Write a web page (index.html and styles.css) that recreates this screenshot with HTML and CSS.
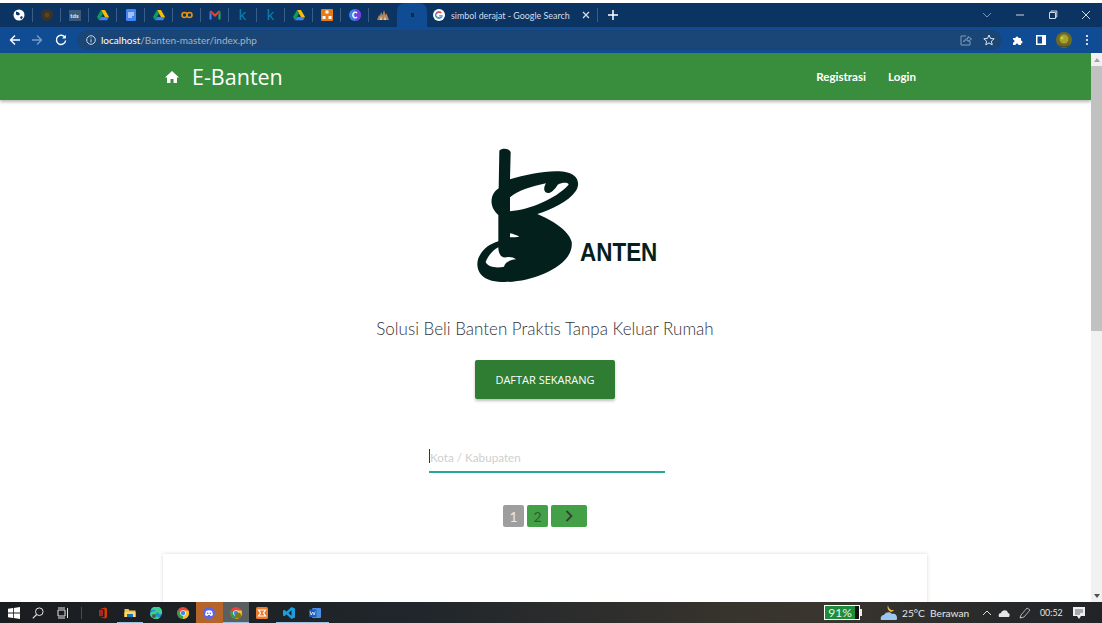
FILE: index.html
```html
<!DOCTYPE html>
<html lang="id">
<head>
<meta charset="utf-8">
<title>E-Banten</title>
<link rel="stylesheet" href="styles.css">
</head>
<body>
<div class="screen">
  <div class="topline"></div>
  <header class="tabstrip">
    <div class="slot"><svg class="ico" viewBox="0 0 12 12"><circle cx="6" cy="6" r="5.5" fill="#fff"/><path d="M3 2.500l3 1 1 2-2 1-2-1zM7 8l2-1 .8 1.500L8 10.500z" fill="#0b3462"/></svg></div>
    <div class="slot"><svg class="ico" viewBox="0 0 12 12"><circle cx="6" cy="6" r="6" fill="#3a3328"/><circle cx="6" cy="6" r="2.500" fill="#5b4426"/></svg></div>
    <div class="slot"><span class="tds">tds</span></div>
    <div class="slot"><svg class="ico" viewBox="0 0 12 12"><use href="#drive"/></svg></div>
    <div class="slot"><svg class="ico" viewBox="0 0 12 12"><rect x="1" width="10" height="12" rx="1.200" fill="#4285f4"/><path d="M3 4h6M3 6h6M3 8h4" stroke="#fff"/></svg></div>
    <div class="slot"><svg class="ico" viewBox="0 0 12 12"><use href="#drive"/></svg></div>
    <div class="slot"><svg class="ico" viewBox="0 0 12 12"><circle cx="3.500" cy="6" r="2.500" fill="none" stroke="#e8910c" stroke-width="1.600"/><circle cx="8.500" cy="6" r="2.500" fill="none" stroke="#e8910c" stroke-width="1.600"/></svg></div>
    <div class="slot"><svg class="ico" viewBox="0 0 12 12"><path d="M.5 2.500v8h2v-5z" fill="#4285f4"/><path d="M11.500 2.500v8h-2v-5z" fill="#34a853"/><path d="M.5 2.500l1.500-1L6 5l4-3.500 1.500 1L6 8z" fill="#ea4335"/></svg></div>
    <div class="slot"><span class="k">k</span></div>
    <div class="slot"><span class="k">k</span></div>
    <div class="slot"><svg class="ico" viewBox="0 0 12 12"><use href="#drive"/></svg></div>
    <div class="slot"><svg class="ico" viewBox="0 0 12 12"><rect width="12" height="12" rx="1" fill="#ea7a16"/><path d="M4.500 1.500h3v3h-3zM1.500 7h3v3h-3zM7.500 7h3v3h-3z" fill="#fff"/></svg></div>
    <div class="slot"><svg class="ico" viewBox="0 0 12 12"><circle cx="6" cy="6" r="6" fill="#3f7ff0"/><path d="M6 0a6 6 0 0 1 0 12z" fill="#7d3ce0"/><path d="M8 4.200A2.300 2.800 0 1 0 8 7.800" fill="none" stroke="#fff" stroke-width="1.300"/></svg></div>
    <div class="slot slot-last"><svg class="ico" viewBox="0 0 12 12"><path d="M0 11l2-5 1 1 1-4 1.500 3L7 1l1.500 5 1-1.500L12 11z" fill="#b2845a"/><path d="M3 11l1-4 1 4zM7 11l1-4 1 4z" fill="#e7d9c4"/></svg></div>
    <div class="tab-pinned"><span class="pin-dot"></span></div>
    <div class="tab-open">
      <svg class="ico" viewBox="0 0 12 12"><circle cx="6" cy="6" r="6" fill="#fff"/><path d="M9.800 6.200H6.200v1.200h2.200a2.600 2.600 0 1 1-.7-3.200l.9-.9a3.900 3.900 0 1 0 1.200 2.900z" fill="#4285f4"/><path d="M2.700 4.400a3.900 3.900 0 0 1 5.900-1.100l-.9.900a2.600 2.600 0 0 0-3.900.9z" fill="#ea4335"/><path d="M2.600 7.500l1.100-.8a2.600 2.600 0 0 0 3.900 1l1 .8a3.900 3.900 0 0 1-6-2z" fill="#34a853"/></svg>
      <span class="tab-title">simbol derajat - Google Search</span>
      <svg class="tab-x" viewBox="0 0 8 8"><path d="M1 1l6 6M7 1l-6 6" stroke="#d5dde8" stroke-width="1.300"/></svg>
    </div>
    <span class="tab-sep"></span>
    <svg class="newtab" viewBox="0 0 10 10"><path d="M5 0v10M0 5h10" stroke="#fff" stroke-width="1.500"/></svg>
    <div class="winctl">
      <div class="wbtn"><svg class="wico" viewBox="0 0 10 10"><path d="M1 3l4 4 4-4" fill="none" stroke="#7f94ad"/></svg></div>
      <div class="wbtn"><svg class="wico" viewBox="0 0 10 10"><path d="M1 5h8" stroke="#cfd8e3"/></svg></div>
      <div class="wbtn"><svg class="wico" viewBox="0 0 10 10"><path d="M1.500 2.500h6v6h-6zM3 2.500V1h5.800v6H7.500" fill="none" stroke="#cfd8e3"/></svg></div>
      <div class="wbtn"><svg class="wico" viewBox="0 0 10 10"><path d="M1 1l8 8M9 1l-8 8" stroke="#cfd8e3"/></svg></div>
    </div>
  </header>
  <div class="toolbar">
    <svg class="tool t-back" viewBox="0 0 12 12"><path d="M11 6H1.500M6 1.500L1.500 6 6 10.500" fill="none" stroke="#fff" stroke-width="1.400"/></svg>
    <svg class="tool t-fwd" viewBox="0 0 12 12"><path d="M1 6h9.500M6 1.500L10.500 6 6 10.500" fill="none" stroke="#7b9cc4" stroke-width="1.400"/></svg>
    <svg class="tool t-reload" viewBox="0 0 12 12"><path d="M10 3.500A4.600 4.600 0 1 0 10.600 6.500" fill="none" stroke="#fff" stroke-width="1.400"/><path d="M10.800 .8v3.700H7.100z" fill="#fff"/></svg>
    <div class="omnibox">
      <svg class="info" viewBox="0 0 10 10"><circle cx="5" cy="5" r="4.300" fill="none" stroke="#d2d9e3"/><path d="M5 4.300v3M5 2.400v1" stroke="#d2d9e3"/></svg>
      <span class="url"><span class="host">localhost</span>/Banten-master/index.php</span>
      <svg class="o-share" viewBox="0 0 12 12"><path d="M6 2H1v9h9V7" fill="none" stroke="#7f9bbd"/><path d="M3.500 8C4 5.500 6 4.500 8 4.500V2.500L11.500 5 8 7.500V6C6 6 4.500 6.500 3.500 8z" fill="none" stroke="#7f9bbd"/></svg>
      <svg class="o-star" viewBox="0 0 12 12"><path d="M6 1l1.500 3.400 3.700.4-2.800 2.400.8 3.600L6 8.900l-3.200 1.900.8-3.600L.8 4.800l3.700-.4z" fill="none" stroke="#dfe6ef"/></svg>
    </div>
    <svg class="tool t-puzzle" viewBox="0 0 12 12"><path d="M1 4h2.500a1.500 1.500 0 1 1 3 0H9v2.500a1.500 1.500 0 1 1 0 3V11H6.500a1.500 1.500 0 0 0-3 0H1V8.500a1.500 1.500 0 0 0 0-3z" fill="#fff"/></svg>
    <svg class="tool t-side" viewBox="0 0 12 12"><path d="M1 1h10v10H1z" fill="#fff"/><path d="M2.500 2.500h4.500v7H2.500z" fill="#0f4c94"/></svg>
    <svg class="avatar" viewBox="0 0 16 16"><circle cx="8" cy="8" r="8" fill="#6d6a24"/><circle cx="8" cy="7" r="4.500" fill="#a8a22a"/><circle cx="6" cy="6" r="1.500" fill="#cfc83a"/><path d="M2 12c3 3 9 3 12 0l-2 3H4z" fill="#4a4a3a"/></svg>
    <svg class="dots" viewBox="0 0 4 12"><circle cx="2" cy="2" r="1.100" fill="#fff"/><circle cx="2" cy="6" r="1.100" fill="#fff"/><circle cx="2" cy="10" r="1.100" fill="#fff"/></svg>
  </div>
  <div class="viewport">
    <main class="page">
      <nav class="navbar">
        <div class="brand">
          <svg class="home" viewBox="0 0 14 12"><path d="M7 0L0 6.500h2V12h3.500V8h3v4H12V6.500h2z" fill="#fff"/></svg>
          <span class="brand-name">E-Banten</span>
        </div>
        <div class="navlinks"><a class="navlink">Registrasi</a><a class="navlink">Login</a></div>
      </nav>
      <section class="hero">
        <svg class="logo" viewBox="-150 0 810 450" role="img" aria-label="Logo Banten">
          <path fill="#04201d" fill-rule="evenodd" d="M118 32C126 24 146 24 152 36L150 118C205 102 280 86 325 98C352 106 362 128 348 152C325 185 275 208 232 222C275 240 325 270 335 305C340 345 305 378 250 402C205 422 140 432 95 422C60 414 45 385 55 355C68 325 90 312 115 304L115 225C98 210 90 190 97 168C102 155 110 150 116 145ZM150 172L150 214C210 208 285 178 325 135C330 128 310 124 293 134C285 148 270 165 257 157C248 148 255 135 258 130C215 140 175 150 150 172ZM77 366C85 345 100 330 115 322C115 340 122 355 140 352C150 350 160 352 168 358C150 360 135 366 132 380C115 384 85 384 77 366ZM150 280L150 292C162 292 170 291 178 290C170 286 160 282 150 280Z"/>
          <text class="logo-word" x="360" y="364" textLength="232" lengthAdjust="spacingAndGlyphs">ANTEN</text>
        </svg>
        <p class="tagline">Solusi Beli Banten Praktis Tanpa Keluar Rumah</p>
        <a class="cta">DAFTAR SEKARANG</a>
        <div class="search"><input class="search-input" type="text" placeholder="Kota / Kabupaten"></div>
        <div class="pager">
          <span class="pg pg-off">1</span>
          <span class="pg pg-on">2</span>
          <span class="pg pg-next"><svg class="pg-arrow" viewBox="0 0 8 12"><path d="M1.500 1l5 5-5 5" fill="none" stroke="#3b3b3b" stroke-width="1.800"/></svg></span>
        </div>
        <div class="card"></div>
      </section>
    </main>
    <div class="scrollbar">
      <span class="sb-btn"><svg class="sb-arrow" viewBox="0 0 6 4"><path d="M3 0l3 4H0z" fill="#a3a3a3"/></svg></span>
      <div class="sb-track"><div class="sb-thumb"></div></div>
      <span class="sb-btn"><svg class="sb-arrow" viewBox="0 0 6 4"><path d="M3 4l3-4H0z" fill="#505050"/></svg></span>
    </div>
  </div>
  <footer class="taskbar">
    <svg class="tb-win" viewBox="0 0 12 12"><path d="M0 1.800l5-.8v4.600H0zM5.800.9L12 0v5.600H5.800zM0 6.400h5V11l-5-.8zM5.800 6.400H12V12l-6.200-.9z" fill="#fff"/></svg>
    <svg class="tb-search" viewBox="0 0 12 12"><circle cx="7.300" cy="4.700" r="3.800" fill="none" stroke="#e4e4e4"/><path d="M4.600 7.500L.8 11.300" stroke="#e4e4e4" stroke-width="1.100"/></svg>
    <svg class="tb-view" viewBox="0 0 12 12"><path d="M1 3h7v6H1zM1 1h7M1 11h7M10.500 1v10" fill="none" stroke="#e4e4e4"/></svg>
    <span class="tb-sep"></span>
    <div class="tb-apps">
      <span class="app"><svg class="ico" viewBox="0 0 12 12"><path d="M2 2.500L7.500 .5l2.500 1v9l-2.500 1L2 9.500l5.500 1V2z" fill="#d83b01"/><rect x="2" y="3" width="4" height="6" fill="#a4262c"/></svg></span>
      <span class="app app-run"><svg class="ico" viewBox="0 0 12 12"><path d="M.5 2h4l1 1.500h6V10H.5z" fill="#f5c443"/><rect x=".5" y="5" width="11" height="5" fill="#ffd965"/><rect x="3" y="7" width="6" height="3" fill="#1a6fb8"/></svg></span>
      <span class="app"><svg class="ico" viewBox="0 0 12 12"><circle cx="6" cy="6" r="6" fill="#1f8fd6"/><path d="M0 7a6 6 0 0 0 10 3.500C7 11 5 8 6 6c1-1 3-.5 3 1h3A6 6 0 0 0 .5 3.500C2 2.500 5 2.500 6 4 3 4 .5 5 0 7z" fill="#3ecf8e"/><circle cx="4" cy="9" r="2" fill="#555"/></svg></span>
      <span class="app"><svg class="ico" viewBox="0 0 12 12"><use href="#chrome"/></svg></span>
      <span class="app app-discord"><svg class="ico" viewBox="0 0 12 12"><circle cx="6" cy="6" r="6" fill="#5865f2"/><path d="M3 4c2-1 4-1 6 0l1 4c-1 .7-2 1-2.500 1L7 8H5l-.5 1C4 9 3 8.700 2 8z" fill="#fff"/><circle cx="4.700" cy="6.300" r=".8" fill="#5865f2"/><circle cx="7.300" cy="6.300" r=".8" fill="#5865f2"/></svg></span>
      <span class="app app-active"><svg class="ico" viewBox="0 0 12 12"><use href="#chrome"/><circle cx="8" cy="8.500" r="3" fill="#7d7a1e"/></svg></span>
      <span class="app"><svg class="ico" viewBox="0 0 12 12"><rect width="12" height="12" rx="1.500" fill="#ee7b2e"/><path d="M2.500 3h7L7.500 6l2 3h-7l2-3z" fill="none" stroke="#fff" stroke-width="1.200"/></svg></span>
      <span class="app app-run"><svg class="ico" viewBox="0 0 12 12"><path d="M8.500 0L12 1.500v9L8.500 12 3.500 7.500 1.300 9.300 0 8.500V3.500l1.300-.8 2.200 1.800zM8.500 3.300L5.500 6l3 2.700z" fill="#1b9de2"/></svg></span>
      <span class="app app-run"><svg class="ico" viewBox="0 0 12 12"><rect x="3" y="1" width="9" height="10" rx="1" fill="#4a8fe0"/><rect y="2.500" width="7.500" height="7.500" rx=".8" fill="#1b5ebe"/><path d="M1.200 4.500l1 3.500 1.500-3 1.500 3 1-3.500" fill="none" stroke="#fff" stroke-width=".7"/></svg></span>
    </div>
    <div class="battery"><span class="bat-body"><span class="bat-fill">91%</span></span><span class="bat-tip"></span></div>
    <svg class="weather" viewBox="0 0 18 16"><path d="M8 0a5 5 0 0 0 3 7 5 5 0 0 0 3-2A5 5 0 0 1 8 0z" fill="#f3b63a"/><path d="M1 15c-1-3 1-5 3-5 1-3 6-4 8-1 3-1 5 1 5 4 0 1 0 2-1 2z" fill="#9dc6ee"/></svg>
    <span class="temp">25°C&nbsp; Berawan</span>
    <svg class="tray tr-up" viewBox="0 0 10 6"><path d="M1 5l4-4 4 4" fill="none" stroke="#dcdcdc"/></svg>
    <svg class="tray tr-cloud" viewBox="0 0 12 8"><path d="M1 8C0 6 1 4 3 4c1-3 6-4 7 0 2 0 2 3 1 4z" fill="#e6e6e6"/></svg>
    <svg class="tray tr-pen" viewBox="0 0 12 12"><path d="M1 11l1-3 6-7 3 2-6 7zM3 11c-1-1-2-1-2-1" fill="none" stroke="#cfcfcf" stroke-width=".8"/></svg>
    <span class="clock">00:52</span>
    <svg class="tray tr-note" viewBox="0 0 12 12"><path d="M0 0h12v9H8l-2 3-2-3H0z" fill="#eee"/><path d="M2 3h8M2 5h8M2 7h5" stroke="#26292c" stroke-width=".7"/></svg>
  </footer>
</div>
<svg class="defs" aria-hidden="true">
  <defs>
    <g id="drive"><path d="M4 1h4l4 7H8z" fill="#fbbc04"/><path d="M4 1L0 8l2 3.300L6 4.500z" fill="#0f9d58"/><path d="M2 11.300h8L12 8H4.200z" fill="#4285f4"/></g>
    <g id="chrome"><circle cx="6" cy="6" r="6" fill="#e8453c"/><path d="M6 6L1 3.200A6 6 0 0 0 6 12l2.800-4.800z" fill="#30a04e"/><path d="M6 3.500h5.500A6 6 0 0 1 6 12z" fill="#f8bf28"/><circle cx="6" cy="6" r="2.800" fill="#fff"/><circle cx="6" cy="6" r="2.200" fill="#4285f4"/></g>
  </defs>
</svg>
</body>
</html>
```
FILE: styles.css
```css
* { box-sizing: border-box; }
html, body { margin: 0; padding: 0; height: 100%; overflow: hidden; background: #fff; }
body { font-family: Lato, Roboto, sans-serif; color: #333; }
.defs { width: 0; height: 0; display: block; }
.screen { width: 1102px; height: 623px; display: flex; flex-direction: column; overflow: hidden; }
.topline { height: 3px; background: #fff; flex: none; }

/* tab strip */
.tabstrip { height: 24px; flex: none; display: flex; align-items: center; background: #0b3462; padding-left: 5px; }
.slot { width: 28px; height: 14px; flex: none; display: flex; align-items: center; justify-content: center; border-right: 1px solid #3a5d85; }
.slot-last { border-right: 0; }
.ico { width: 12px; height: 12px; display: block; flex: none; }
.tds { width: 12px; height: 11px; background: #3f5a76; color: #e6ecf2; font-size: 6px; font-weight: 700; line-height: 11px; text-align: center; }
.k { font-size: 15px; line-height: 14px; color: #0f7fb5; font-family: "Liberation Sans", sans-serif; }
.tab-pinned { width: 30px; height: 24px; flex: none; background: #0f4c94; border-radius: 8px 8px 0 0; display: flex; align-items: center; justify-content: center; }
.pin-dot { width: 3px; height: 4px; background: #0b2a4c; }
.tab-open { width: 170px; height: 24px; flex: none; display: flex; align-items: center; padding-left: 6px; }
.tab-title { margin-left: 6px; width: 131px; font-size: 8.900px; color: #d5dde8; white-space: nowrap; }
.tab-x { width: 8px; height: 8px; flex: none; }
.tab-sep { width: 1px; height: 14px; background: #3a5d85; flex: none; }
.newtab { width: 10px; height: 10px; flex: none; margin-left: 10px; }
.winctl { margin-left: auto; display: flex; height: 24px; }
.wbtn { width: 33px; display: flex; align-items: center; justify-content: center; }
.wico { width: 10px; height: 10px; display: block; }

/* toolbar */
.toolbar { height: 26px; flex: none; display: flex; align-items: center; background: #0f4c94; padding-left: 9px; }
.tool { width: 12px; height: 12px; flex: none; display: block; }
.t-fwd { margin-left: 10px; }
.t-reload { margin-left: 12px; }
.omnibox { width: 925px; height: 20px; margin-left: 10px; flex: none; background: #1a4677; border-radius: 10px; display: flex; align-items: center; padding-left: 9px; }
.info { width: 10px; height: 10px; flex: none; display: block; }
.url { margin-left: 5px; font-size: 10px; color: #a3b3c7; white-space: nowrap; }
.host { color: #fff; }
.o-share { width: 12px; height: 12px; margin-left: auto; display: block; flex: none; }
.o-star { width: 12px; height: 12px; margin-left: 11px; margin-right: 7px; display: block; flex: none; }
.t-puzzle { margin-left: 10px; }
.t-side { margin-left: 11px; }
.avatar { width: 16px; height: 16px; margin-left: 9px; flex: none; display: block; }
.dots { width: 4px; height: 12px; margin-left: 13px; flex: none; display: block; }

/* page */
.viewport { height: 549px; flex: none; display: flex; overflow: hidden; }
.page { width: 1091px; flex: none; overflow: hidden; background: #fff; }
.navbar { height: 47px; background: #388e3c; box-shadow: 0 2px 3px rgba(0,0,0,.28); display: flex; align-items: center; padding: 0 175px 0 165px; position: relative; justify-content: space-between; }
.brand { display: flex; align-items: center; }
.home { width: 14px; height: 12px; display: block; }
.brand-name { margin-left: 13px; font: 21.500px/30px "Open Sans", sans-serif; color: #fff; }
.navlinks { display: flex; gap: 22px; }
.navlink { font-size: 11.600px; font-weight: 700; color: #fff; }
.hero { width: 764px; margin: 0 0 0 163px; display: flex; flex-direction: column; align-items: center; }
.logo { width: 270px; height: 150px; display: block; margin-top: 40px; flex: none; }
.logo-word { font-family: "Liberation Sans", sans-serif; font-weight: 700; font-size: 80px; fill: #04201d; }
.tagline { margin: 26px 0 0; height: 26px; line-height: 26px; font-size: 17px; font-weight: 300; color: #333; white-space: nowrap; }
.cta { margin-top: 18px; width: 140px; height: 39px; line-height: 39px; background: #2e7d32; color: #fff; font: 11px/39px "Open Sans", sans-serif; text-align: center; border-radius: 2px; box-shadow: 0 2px 3px rgba(0,0,0,.25); }
.search { margin-top: 44px; width: 236px; height: 30px; margin-left: 4px; position: relative; flex: none; }
.search::before { content: ""; position: absolute; left: 0; top: 6px; width: 1px; height: 14px; background: #333; }
.search-input { width: 100%; height: 30px; border: 0; border-bottom: 2px solid #26a69a; outline: 0; padding: 0 0 1px 1px; background: transparent; font: 11.700px Lato, sans-serif; color: #555; }
.search-input::placeholder { color: #cfcfcf; opacity: 1; }
.pager { margin-top: 32px; height: 22px; display: flex; gap: 3px; flex: none; }
.pg { height: 22px; border-radius: 2px; display: flex; align-items: center; justify-content: center; font-size: 14px; width: 21px; }
.pg-off { background: #9e9e9e; color: #e8e8e8; }
.pg-on { background: #43a047; color: #2f5f32; }
.pg-next { background: #43a047; width: 36px; }
.pg-arrow { width: 8px; height: 12px; display: block; }
.card { margin-top: 27px; width: 764px; height: 120px; flex: none; background: #fff; box-shadow: 0 0 4px rgba(0,0,0,.16); }

/* scrollbar */
.scrollbar { width: 11px; flex: none; background: #f1f1f1; display: flex; flex-direction: column; }
.sb-btn { height: 13px; flex: none; display: flex; align-items: center; justify-content: center; }
.sb-arrow { width: 6px; height: 4px; display: block; }
.sb-track { flex: 1; }
.sb-thumb { height: 265px; background: #c1c1c1; }

/* taskbar */
.taskbar { height: 21px; flex: none; display: flex; align-items: center; background: linear-gradient(90deg, #1a1d20 0%, #20262b 38%, #37332d 66%, #3a362f 75%, #26282a 92%, #212326 100%); padding-left: 8px; color: #e6e6e6; }
.tb-win { width: 12px; height: 12px; display: block; flex: none; }
.tb-search { width: 12px; height: 12px; margin-left: 12px; display: block; flex: none; }
.tb-view { width: 12px; height: 12px; margin-left: 13px; display: block; flex: none; }
.tb-sep { width: 1px; height: 12px; background: #4a4a4a; margin-left: 12px; flex: none; }
.tb-apps { display: flex; margin-left: 8px; height: 21px; }
.app { width: 26.500px; height: 21px; flex: none; display: flex; align-items: center; justify-content: center; }
.app-run { box-shadow: inset 0 -1px 0 #9fc0dc; }
.app-discord { background: #b5652a; }
.app-active { background: #5c5f60; box-shadow: inset 0 -1px 0 #9fc0dc; }
.battery { margin-left: auto; display: flex; align-items: center; flex: none; }
.bat-body { width: 36px; height: 15px; border: 1px solid #fff; display: flex; background: #111; }
.bat-fill { width: 30px; background: #1f8c3a; color: #e8f5ea; font-size: 12px; line-height: 13px; text-align: center; }
.bat-tip { width: 2px; height: 7px; background: #eee; }
.weather { width: 18px; height: 16px; margin-left: 18px; flex: none; display: block; }
.temp { margin-left: 4px; width: 67px; font-size: 10.200px; white-space: nowrap; }
.tray { display: block; flex: none; }
.tr-up { width: 10px; height: 6px; margin-left: 13px; }
.tr-cloud { width: 12px; height: 8px; margin-left: 6px; }
.tr-pen { width: 12px; height: 12px; margin-left: 9px; }
.clock { margin-left: 9px; width: 20px; font-size: 8.800px; white-space: nowrap; }
.tr-note { width: 12px; height: 12px; margin-left: 13px; margin-right: 17px; }
```
